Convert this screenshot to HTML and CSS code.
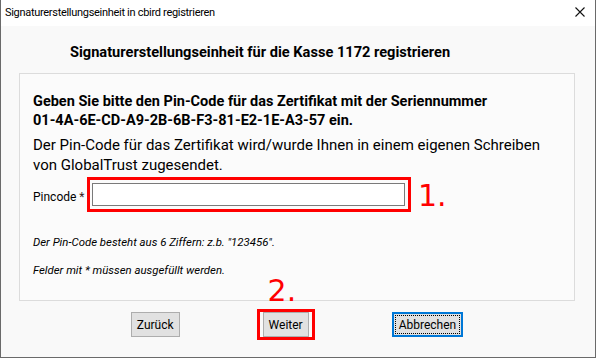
FILE: index.html
```html
<!DOCTYPE html>
<html lang="de">
<head>
    <meta charset="UTF-8">
    <meta name="viewport" content="width=device-width, initial-scale=1.0">
    <title>Signaturerstellungseinheit in cbird registrieren</title>
    <link rel="stylesheet" href="styles.css">
</head>
<body>
    <div class="window">
        <div class="titlebar">
            <span class="title">Signaturerstellungseinheit in cbird registrieren</span>
            <svg class="close" width="10" height="10" viewBox="0 0 10 10">
                <path d="M0.5 0.5 L9.5 9.5 M9.5 0.5 L0.5 9.5" stroke="#111" stroke-width="1.1" fill="none"/>
            </svg>
        </div>
        <div class="content">
            <h1 class="heading">Signaturerstellungseinheit für die Kasse 1172 registrieren</h1>
            <div class="panel">
                <p class="lead">Geben Sie bitte den Pin-Code für das Zertifikat mit der Seriennummer <span class="serial">01-4A-6E-CD-A9-2B-6B-F3-81-E2-1E-A3-57</span> ein.</p>
                <p class="info">Der Pin-Code für das Zertifikat wird/wurde Ihnen in einem eigenen Schreiben von GlobalTrust zugesendet.</p>
                <div class="field-row">
                    <label class="field-label" for="pincode">Pincode <span class="req">*</span></label>
                    <div class="mark-input">
                        <input id="pincode" class="pin-input" type="text">
                    </div>
                    <span class="step">1.</span>
                </div>
                <p class="hint hint-first">Der Pin-Code besteht aus 6 Ziffern: z.b. "123456".</p>
                <p class="hint">Felder mit * müssen ausgefüllt werden.</p>
            </div>
            <div class="buttons">
                <button class="btn">Zurück</button>
                <span class="mark-button">
                    <button class="btn">Weiter</button>
                    <span class="step step-two">2.</span>
                </span>
                <button class="btn btn-focus">Abbrechen</button>
            </div>
        </div>
    </div>
</body>
</html>
```

FILE: styles.css
```css
body {
    margin: 0;
    font-family: Roboto, "Noto Sans", sans-serif;
    color: #000;
    background-color: #f9f9f9;
}
.window {
    width: 596px;
    height: 358px;
    box-sizing: border-box;
    border-left: 1px solid #6a6a6a;
    border-right: 1px solid #6a6a6a;
    border-bottom: 1px solid #6a6a6a;
    display: flex;
    flex-direction: column;
    background-color: #f9f9f9;
}
.titlebar {
    height: 26px;
    flex-shrink: 0;
    background-color: #fff;
    display: flex;
    align-items: center;
    justify-content: space-between;
    padding: 0 10px 0 4px;
}
.title {
    font-size: 11px;
    letter-spacing: -0.3px;
    margin-top: -1px;
}
.close {
    display: block;
    margin-top: -2px;
}
.content {
    flex: 1;
    display: flex;
    flex-direction: column;
    padding: 0 20px 0 18px;
}
.heading {
    margin: 16px 0 11px;
    padding-left: 51px;
    font-size: 14.6px;
    line-height: 20px;
    font-weight: bold;
}
.panel {
    border: 1px solid #dcdcdc;
    background-color: #fbfbfb;
    padding: 18px 14px 22px 13px;
}
.lead {
    margin: 0;
    font-size: 14.5px;
    line-height: 19px;
    font-weight: bold;
}
.serial {
    white-space: nowrap;
}
.info {
    margin: 5px 0 0;
    font-size: 15px;
    line-height: 20px;
}
.field-row {
    display: flex;
    align-items: center;
    margin-top: 2px;
}
.field-label {
    font-size: 12px;
    width: 54px;
    margin-top: 4px;
}
.req {
    color: #3a1a1a;
}
.mark-input {
    border: 3px solid #f00;
    padding: 3px 3px 3px 2px;
}
.pin-input {
    display: block;
    width: 313px;
    height: 23px;
    box-sizing: border-box;
    border: 1px solid #7a7a7a;
    background-color: #fff;
    margin: 0;
    padding: 0 3px;
    font-family: inherit;
}
.step {
    font-family: "DejaVu Sans", sans-serif;
    font-size: 30px;
    line-height: 30px;
    color: #f00;
    margin: 2px 0 0 7px;
}
.hint {
    margin: 13px 0 0;
    font-size: 11.4px;
    line-height: 15px;
    font-style: italic;
}
.hint-first {
    margin-top: 23px;
}
.buttons {
    display: flex;
    justify-content: center;
    align-items: center;
    gap: 83px;
    margin-top: 11px;
}
.btn {
    height: 25px;
    box-sizing: border-box;
    padding: 0 5px;
    border: 1px solid #adadad;
    background-color: #e1e1e1;
    font-family: inherit;
    font-size: 12px;
    color: #000;
}
.btn-focus {
    border: 2px solid #0078d7;
    outline: 1px dotted #000;
    outline-offset: -4px;
    padding: 0 5px;
}
.mark-button {
    position: relative;
    display: flex;
    border: 3px solid #f00;
    padding: 0 3px;
    margin: -3px -6px;
}
.step-two {
    position: absolute;
    left: 8px;
    top: -36px;
    margin: 0;
}
```
